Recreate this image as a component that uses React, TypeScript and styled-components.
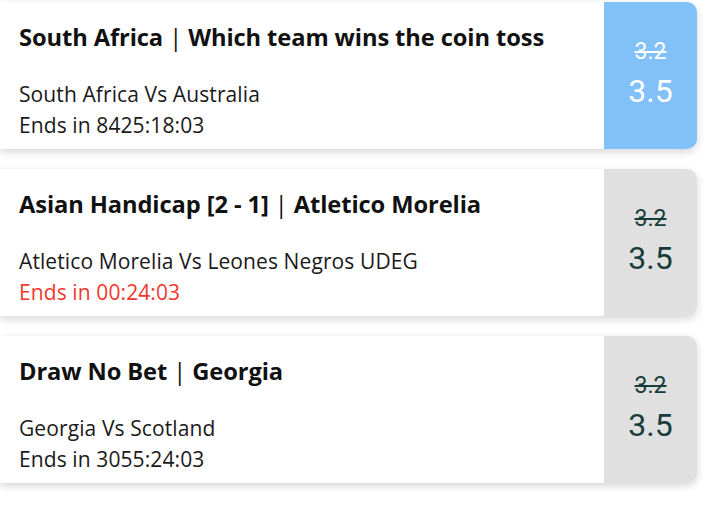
import React from 'react'
import styled, { createGlobalStyle } from 'styled-components'

const GlobalStyle = createGlobalStyle`
  body {
    margin: 0;
    background: #ffffff;
    font-family: 'Open Sans', 'Noto Sans', sans-serif;
  }
`

const List = styled.div`
  display: flex;
  flex-direction: column;
  gap: 20px;
  padding: 2px 27px 20px 0;
`

const Card = styled.div`
  display: flex;
  height: 147px;
  background: #ffffff;
  border-radius: 0 10px 10px 0;
  box-shadow: 0 3px 9px rgba(0, 0, 0, 0.16);
  overflow: hidden;
`

const Info = styled.div`
  flex: 1;
  display: flex;
  flex-direction: column;
  padding: 19px 0 0 19px;
  color: #111111;
`

const Title = styled.div`
  font-size: 23.7px;
  font-weight: 700;
  line-height: 32px;
  margin-bottom: 26px;
  letter-spacing: -0.1px;
  span {
    font-weight: 400;
  }
`

const Line = styled.div<{ $urgent?: boolean }>`
  font-size: 21px;
  line-height: 31px;
  letter-spacing: 0.1px;
  color: ${(p) => (p.$urgent ? '#f0392e' : '#1a1a1a')};
`

const Odds = styled.div<{ $active?: boolean }>`
  width: 93px;
  display: flex;
  flex-direction: column;
  align-items: center;
  justify-content: center;
  padding-bottom: 4px;
  background: ${(p) => (p.$active ? '#82c0f8' : '#e0e0e0')};
  color: ${(p) => (p.$active ? '#ffffff' : '#183c3a')};
  font-family: 'Roboto', sans-serif;
`

const OldOdds = styled.div`
  font-size: 23px;
  line-height: 24px;
  text-decoration: line-through;
  text-decoration-thickness: 1.5px;
  margin-bottom: 10px;
`

const NewOdds = styled.div`
  font-size: 32px;
  line-height: 34px;
`

type Market = {
  market: string
  team: string
  match: string
  ends: string
  urgent?: boolean
  active?: boolean
}

const markets: Market[] = [
  {
    market: 'South Africa',
    team: 'Which team wins the coin toss',
    match: 'South Africa Vs Australia',
    ends: '8425:18:03',
    active: true
  },
  {
    market: 'Asian Handicap [2 - 1]',
    team: 'Atletico Morelia',
    match: 'Atletico Morelia Vs Leones Negros UDEG',
    ends: '00:24:03',
    urgent: true
  },
  {
    market: 'Draw No Bet',
    team: 'Georgia',
    match: 'Georgia Vs Scotland',
    ends: '3055:24:03'
  }
]

export default function App() {
  return (
    <>
      <GlobalStyle />
      <List>
        {markets.map((m) => (
          <Card key={m.match}>
            <Info>
              <Title>
                {m.market} <span>|</span> {m.team}
              </Title>
              <Line>{m.match}</Line>
              <Line $urgent={m.urgent}>Ends in {m.ends}</Line>
            </Info>
            <Odds $active={m.active}>
              <OldOdds>3.2</OldOdds>
              <NewOdds>3.5</NewOdds>
            </Odds>
          </Card>
        ))}
      </List>
    </>
  )
}
